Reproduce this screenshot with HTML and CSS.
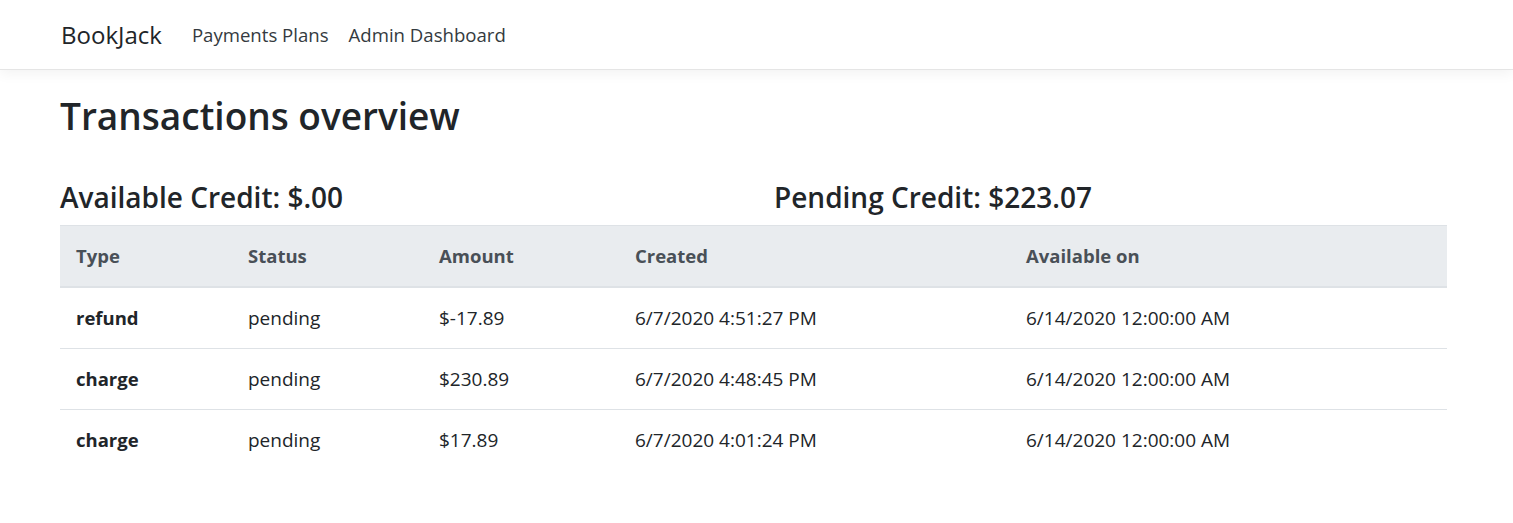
FILE: index.html
```html
<!DOCTYPE html>
<html lang="en">
<head>
<meta charset="utf-8">
<title>Transactions overview - BookJack</title>
<link rel="stylesheet" href="styles.css">
</head>
<body>
<header class="navbar">
  <a class="brand" href="#">BookJack</a>
  <nav class="nav-links">
    <a class="nav-link" href="#">Payments Plans</a>
    <a class="nav-link" href="#">Admin Dashboard</a>
  </nav>
</header>
<main class="main">
  <h1 class="title">Transactions overview</h1>
  <div class="credits">
    <h3 class="credit">Available Credit: $.00</h3>
    <h3 class="credit">Pending Credit: $223.07</h3>
  </div>
  <table class="table">
    <colgroup>
      <col class="c1"><col class="c2"><col class="c3"><col class="c4"><col class="c5">
    </colgroup>
    <thead>
      <tr><th>Type</th><th>Status</th><th>Amount</th><th>Created</th><th>Available on</th></tr>
    </thead>
    <tbody>
      <tr><th>refund</th><td>pending</td><td>$-17.89</td><td>6/7/2020 4:51:27 PM</td><td>6/14/2020 12:00:00 AM</td></tr>
      <tr><th>charge</th><td>pending</td><td>$230.89</td><td>6/7/2020 4:48:45 PM</td><td>6/14/2020 12:00:00 AM</td></tr>
      <tr><th>charge</th><td>pending</td><td>$17.89</td><td>6/7/2020 4:01:24 PM</td><td>6/14/2020 12:00:00 AM</td></tr>
    </tbody>
  </table>
</main>
</body>
</html>
```

FILE: styles.css
```css
* { box-sizing: border-box; }
html, body { margin: 0; padding: 0; }
body {
  font-family: "Open Sans", "Noto Sans", sans-serif;
  font-size: 19px;
  line-height: 1.5;
  color: #212529;
  background: #fff;
}
.navbar {
  display: flex;
  align-items: center;
  height: 70px;
  padding: 0 60px 0 61px;
  border-bottom: 1px solid #e5e5e5;
  box-shadow: 0 4px 12px rgba(0,0,0,.05);
  background: #fff;
}
.brand {
  font-size: 24px;
  color: #212529;
  text-decoration: none;
  margin-right: 30px;
}
.nav-links { display: flex; gap: 20px; }
.nav-link {
  color: #343a40;
  text-decoration: none;
  font-size: 18.6px;
}
.main { padding: 16px 66px 40px 60px; }
.title {
  font-size: 37px;
  font-weight: 600;
  line-height: 1.2;
  margin: 8px 0 0;
}
.credits {
  display: grid;
  grid-template-columns: 714px 1fr;
  margin-top: 43px;
}
.credit {
  font-size: 28px;
  font-weight: 600;
  line-height: 1.2;
  margin: 0 0 10px;
}
.table {
  width: 100%;
  border-collapse: collapse;
  table-layout: fixed;
}
.c1 { width: 172px; }
.c2 { width: 191px; }
.c3 { width: 196px; }
.c4 { width: 391px; }
.table th, .table td {
  text-align: left;
  padding: 18px 16px;
  line-height: 24px;
  vertical-align: top;
  border-top: 1px solid #dee2e6;
}
.table thead th {
  background: #e9ecef;
  color: #495057;
  font-weight: 700;
  font-size: 18.5px;
  border-bottom: 2px solid #dee2e6;
  border-top: 1px solid #dee2e6;
}
.table tbody th { font-weight: 700; font-size: 18.5px; }
```
